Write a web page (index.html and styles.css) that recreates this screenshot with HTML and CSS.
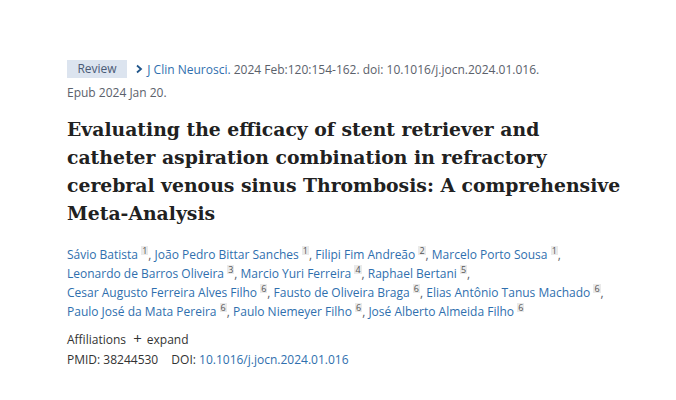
FILE: index.html
```html
<!DOCTYPE html>
<html lang="en">
<head>
<meta charset="utf-8">
<title>Article</title>
<link rel="stylesheet" href="styles.css">
</head>
<body>
<main class="article">
  <div class="cit">
    <span class="ptype">Review</span>
    <span class="chev"><svg width="9" height="10" viewBox="0 0 9 10"><path d="M2 1.5 L6 5 L2 8.5" fill="none" stroke="#20558a" stroke-width="1.8"/></svg></span>
    <a class="journal" href="#">J Clin Neurosci.</a> 2024 Feb:120:154-162. doi: 10.1016/j.jocn.2024.01.016.
    <br>Epub 2024 Jan 20.
  </div>
  <h1 class="title">Evaluating the efficacy of stent retriever and<br>catheter aspiration combination in refractory<br>cerebral venous sinus Thrombosis: A comprehensive<br>Meta-Analysis</h1>
  <div class="authors">
    <a href="#">Sávio Batista</a> <sup>1</sup>, <a href="#">João Pedro Bittar Sanches</a> <sup>1</sup>, <a href="#">Filipi Fim Andreão</a> <sup>2</sup>, <a href="#">Marcelo Porto Sousa</a> <sup>1</sup>,<br>
    <a href="#">Leonardo de Barros Oliveira</a> <sup>3</sup>, <a href="#">Marcio Yuri Ferreira</a> <sup>4</sup>, <a href="#">Raphael Bertani</a> <sup>5</sup>,<br>
    <a href="#">Cesar Augusto Ferreira Alves Filho</a> <sup>6</sup>, <a href="#">Fausto de Oliveira Braga</a> <sup>6</sup>, <a href="#">Elias Antônio Tanus Machado</a> <sup>6</sup>,<br>
    <a href="#">Paulo José da Mata Pereira</a> <sup>6</sup>, <a href="#">Paulo Niemeyer Filho</a> <sup>6</sup>, <a href="#">José Alberto Almeida Filho</a> <sup>6</sup>
  </div>
  <div class="affil">Affiliations <span class="plus">+</span> expand</div>
  <div class="ids">PMID: 38244530 <span class="doi">DOI: <a href="#">10.1016/j.jocn.2024.01.016</a></span></div>
</main>
</body>
</html>
```
FILE: styles.css
```css
html, body { margin: 0; padding: 0; background: #fff; }
body { font-family: "Open Sans", "Noto Sans", sans-serif; color: #5b616b; }
.article { padding: 58px 0 0 67px; width: 580px; }
a { color: #2f6fae; text-decoration: none; }
.cit { font-size: 12px; line-height: 23px; color: #5b616b; }
.ptype { display: inline-block; background: #dce4ef; color: #4a5a76; width: 60px; height: 18px; line-height: 18px; text-align: center; margin-right: 5px; vertical-align: 1px; }
.chev { display: inline-block; vertical-align: 0px; }
.title { font-family: "DejaVu Serif", serif; font-weight: bold; font-size: 18.8px; line-height: 28px; color: #212121; margin: 11px 0 18px; white-space: nowrap; }
.authors { font-size: 12px; line-height: 19px; }
sup { display: inline-block; font-size: 9px; line-height: 9px; background: #eaeaea; color: #555; padding: 0 1px; vertical-align: 5px; }
.affil { margin-top: 7px; font-size: 12px; line-height: 20px; color: #333; }
.plus { font-size: 15px; margin: 0 2px 0 4px; }
.ids { font-size: 12px; line-height: 20px; color: #333; }
.doi { margin-left: 10px; }
```
